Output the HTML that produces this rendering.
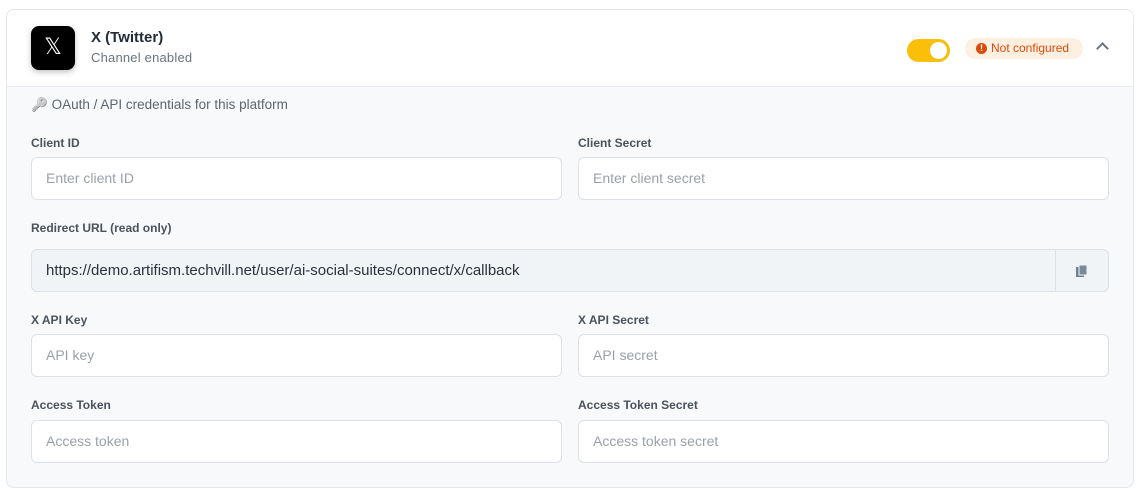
<!DOCTYPE html>
<html><head><style>
*{box-sizing:border-box;margin:0;padding:0}
body{width:1140px;height:495px;background:#fff;font-family:"Liberation Sans",sans-serif;position:relative;overflow:hidden}
.card{position:absolute;left:6px;top:9px;width:1128px;height:479px;border:1px solid #e3e6ea;border-radius:8px;overflow:hidden;background:#f8f9fb}
.head{position:absolute;left:0;top:0;width:100%;height:77px;background:#fff;border-bottom:1px solid #e6e9ed}
.logo{position:absolute;left:24px;top:16px;width:44px;height:44px;background:#000;border-radius:8px;box-shadow:0 2px 6px rgba(0,0,0,.25);color:#fff;font-size:22px;text-align:center;line-height:44px;font-family:"DejaVu Sans",sans-serif}
.t1{position:absolute;left:84px;top:19px;font-weight:bold;font-size:15px;color:#222b36}
.t2{position:absolute;left:84px;top:40px;font-size:13px;color:#6b7480;letter-spacing:.2px}
.tog{position:absolute;left:900px;top:29px;width:43px;height:23px;border-radius:12px;background:#fbbf0a}
.tog:after{content:"";position:absolute;right:3px;top:3px;width:17px;height:17px;border-radius:50%;background:#fff}
.badge{position:absolute;left:958px;top:28px;width:118px;height:21px;border-radius:11px;background:#fdf0e0;color:#dc4a0c;font-size:12px;line-height:21px;padding-left:26px}
.badge:before{content:"!";position:absolute;left:11px;top:5px;width:11px;height:11px;border-radius:50%;background:#dc4a0c;color:#fff;font-size:9px;line-height:11px;text-align:center;font-weight:bold}
.chev{position:absolute;left:1091px;top:34px;width:9px;height:9px;border-left:2px solid #6b7480;border-top:2px solid #6b7480;transform:rotate(45deg)}
.note{position:absolute;left:24px;top:87px;font-size:13.5px;color:#5c6670}
.lab{position:absolute;font-size:12px;font-weight:bold;color:#4a525c}
.in{position:absolute;width:531px;height:43px;border:1px solid #dde1e6;border-radius:6px;background:#fff;font-size:14px;color:#9aa1a9;padding-left:14px;line-height:41px}
</style></head><body>
<div class="card">
<div class="head">
<div class="logo">𝕏</div>
<div class="t1">X (Twitter)</div>
<div class="t2">Channel enabled</div>
<div class="tog"></div>
<div class="badge">Not configured</div>
<div class="chev"></div>
</div>
<div class="note"><span style="filter:grayscale(1)">🔑</span> OAuth / API credentials for this platform</div>
<div class="lab" style="left:24px;top:126px">Client ID</div>
<div class="lab" style="left:571px;top:126px">Client Secret</div>
<div class="in" style="left:24px;top:147px">Enter client ID</div>
<div class="in" style="left:571px;top:147px">Enter client secret</div>
<div class="lab" style="left:24px;top:211px">Redirect URL (read only)</div>
<div class="in" style="left:24px;top:239px;width:1026px;background:#f1f4f7;color:#2a323c;border-radius:6px 0 0 6px;font-size:15px">https://demo.artifism.techvill.net/user/ai-social-suites/connect/x/callback</div>
<div class="in" style="left:1048px;top:239px;width:54px;background:#f1f4f7;border-radius:0 6px 6px 0">
<svg width="14" height="14" viewBox="0 0 14 14" style="position:absolute;left:19px;top:14px"><rect x="1" y="3" width="8" height="10" fill="#6b8090"/><rect x="4" y="1" width="8" height="10" fill="#7a8a98" stroke="#f1f4f7"/></svg></div>
<div class="lab" style="left:24px;top:303px">X API Key</div>
<div class="lab" style="left:571px;top:303px">X API Secret</div>
<div class="in" style="left:24px;top:324px">API key</div>
<div class="in" style="left:571px;top:324px">API secret</div>
<div class="lab" style="left:24px;top:388px">Access Token</div>
<div class="lab" style="left:571px;top:388px">Access Token Secret</div>
<div class="in" style="left:24px;top:410px">Access token</div>
<div class="in" style="left:571px;top:410px">Access token secret</div>
</div>
</body></html>
